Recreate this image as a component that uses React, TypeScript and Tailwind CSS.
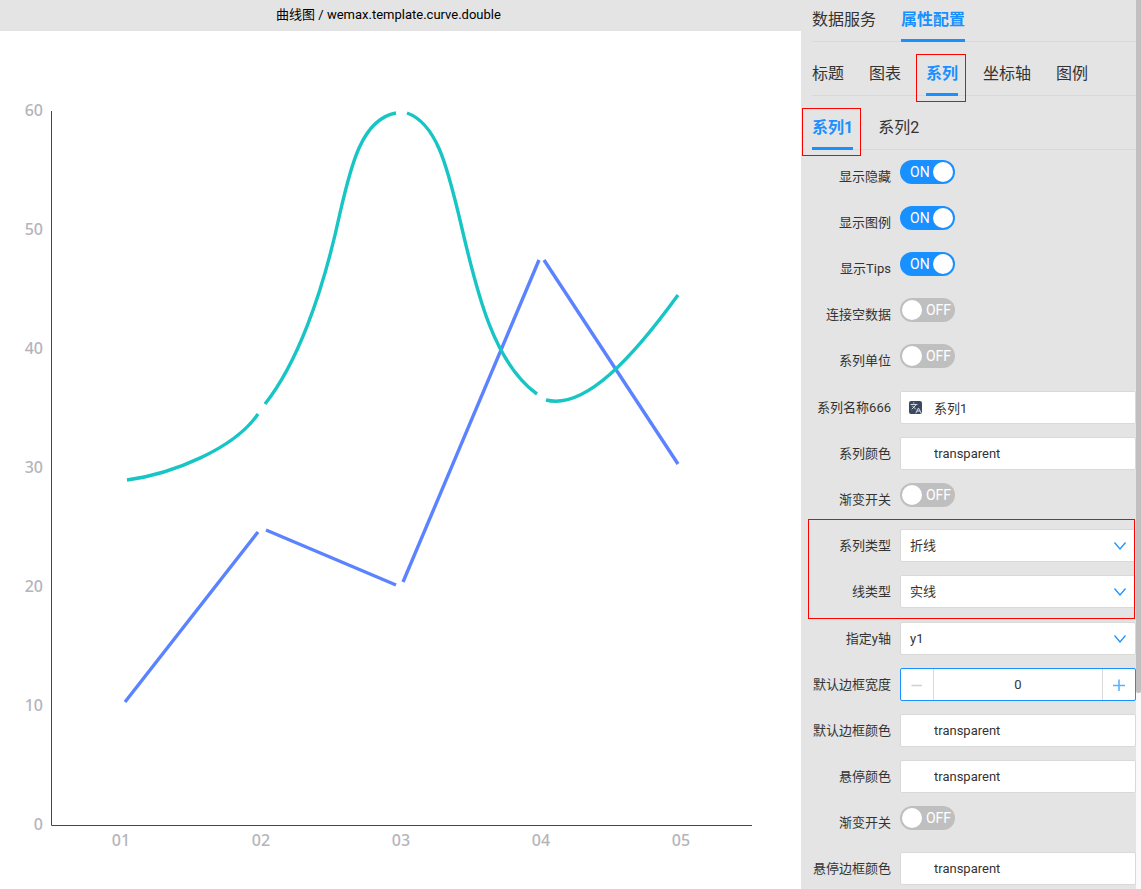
import { useState } from 'react';
import type { ReactNode } from 'react';
import { Languages } from 'lucide-react';
import clsx from 'clsx';

const yTicks = [60, 50, 40, 30, 20, 10, 0];
const xTicks = ['01', '02', '03', '04', '05'];

// line series, broken around each data point
const blueSegments = [
    'M125 702 L258 532',
    'M266 530 L396 585',
    'M403 582 L539 260',
    'M544 260 L678 464',
];

const greenSegments = [
    'M127 480 C172 474 234 449 258 414',
    'M265 404 C296 365 322 297 340 213 C351 165 362 119 396 113',
    'M407 113 C438 124 448 171 460 220 C477 294 494 363 537 394',
    'M546 400 C585 410 633 357 678 295',
];

function CurveChart() {
    return (
        <svg viewBox="0 31 801 858" className="block w-full" role="img" aria-label="曲线图">
            <g fill="none" stroke="#5b83ff" strokeWidth="3.4">
                {blueSegments.map((d) => (
                    <path key={d} d={d} />
                ))}
            </g>
            <g fill="none" stroke="#17c5c4" strokeWidth="3.4">
                {greenSegments.map((d) => (
                    <path key={d} d={d} />
                ))}
            </g>
            <path d="M51.5 111 V825.5 H752" fill="none" stroke="#41465c" strokeWidth="1" />
            <g className="fill-[#b4b4bc] font-['Noto_Sans',sans-serif] text-[16px] font-medium">
                {yTicks.map((tick, i) => (
                    <text key={tick} x="43" y={116 + i * 119} textAnchor="end">
                        {tick}
                    </text>
                ))}
                {xTicks.map((tick, i) => (
                    <text key={tick} x={121 + i * 140} y="846" textAnchor="middle">
                        {tick}
                    </text>
                ))}
            </g>
        </svg>
    );
}

interface TabRowProps {
    label: string;
    tabs: string[];
    initial: number;
    marked?: boolean;
}

function TabRow({ label, tabs, initial, marked }: TabRowProps) {
    const [active, setActive] = useState(initial);

    return (
        <div role="tablist" aria-label={label} className="flex h-[42px] gap-[25px] border-b border-[#d9d9d9]">
            {tabs.map((tab, i) => (
                <button
                    key={tab}
                    type="button"
                    role="tab"
                    aria-selected={i === active}
                    onClick={() => setActive(i)}
                    className={clsx(
                        'relative h-[42px] border-b-3 text-base leading-[39px]',
                        i === active ? 'border-[#1890ff] font-bold text-[#1890ff]' : 'border-transparent',
                    )}
                >
                    {tab}
                    {marked && i === initial && (
                        <span className="pointer-events-none absolute top-0 -right-2 -bottom-[9px] -left-[10px] border border-[#ff0000]" />
                    )}
                </button>
            ))}
        </div>
    );
}

function Row({ id, label, children }: { id: string; label: string; children: ReactNode }) {
    return (
        <div className="flex h-[33px] gap-[9px]">
            <label htmlFor={id} className="w-[79px] shrink-0 text-right leading-[33px] whitespace-nowrap">
                {label}
            </label>
            <div className="min-w-0 flex-1">{children}</div>
        </div>
    );
}

function SwitchRow({ id, label, on = false }: { id: string; label: string; on?: boolean }) {
    const [checked, setChecked] = useState(on);

    return (
        <Row id={id} label={label}>
            <button
                id={id}
                type="button"
                role="switch"
                aria-checked={checked}
                onClick={() => setChecked(!checked)}
                className={clsx(
                    'flex h-6 w-[55px] items-center justify-between rounded-full px-0.5 text-sm leading-6 text-white',
                    checked ? 'bg-[#1890ff]' : 'flex-row-reverse bg-[#bfbfbf]',
                )}
            >
                <span className={checked ? 'pl-2' : 'pr-0.5'}>{checked ? 'ON' : 'OFF'}</span>
                <span className="size-5 rounded-full bg-white" />
            </button>
        </Row>
    );
}

interface TextRowProps {
    id: string;
    label: string;
    value: string;
    icon?: boolean;
}

function TextRow({ id, label, value, icon }: TextRowProps) {
    return (
        <Row id={id} label={label}>
            <div className="relative">
                {icon && (
                    <span className="absolute top-[10px] left-[9px] flex size-[13px] items-center justify-center rounded-xs bg-[#3a4a62] text-[#d5dae2]">
                        <Languages className="size-[12px]" />
                    </span>
                )}
                <input
                    id={id}
                    type="text"
                    defaultValue={value}
                    className="block h-[33px] w-full rounded-xs border border-[#d9d9d9] bg-white pr-2 pl-[33px] outline-none focus:border-[#1890ff]"
                />
            </div>
        </Row>
    );
}

function SelectRow({ id, label, options }: { id: string; label: string; options: string[] }) {
    return (
        <Row id={id} label={label}>
            <div className="relative">
                <select
                    id={id}
                    className="block h-[33px] w-full appearance-none rounded-xs border border-[#d9d9d9] bg-white pr-8 pl-[9px] outline-none focus:border-[#1890ff]"
                >
                    {options.map((option) => (
                        <option key={option}>{option}</option>
                    ))}
                </select>
                <svg
                    viewBox="0 0 12 8"
                    className="pointer-events-none absolute top-[13px] right-[10px] h-2 w-3"
                    fill="none"
                    stroke="#1890ff"
                    strokeWidth="1.2"
                >
                    <path d="M0.5 0.5 L6 7 L11.5 0.5" />
                </svg>
            </div>
        </Row>
    );
}

function NumberRow({ id, label }: { id: string; label: string }) {
    const [value, setValue] = useState(0);

    return (
        <Row id={id} label={label}>
            <div className="flex h-[33px] overflow-hidden rounded-xs border border-[#1890ff] bg-white">
                <button
                    type="button"
                    aria-label="减少"
                    disabled={value === 0}
                    onClick={() => setValue(value - 1)}
                    className="flex w-[33px] shrink-0 items-center justify-center border-r border-[#d9d9d9]"
                >
                    <svg viewBox="0 0 12 12" className="size-3 stroke-[#d0d0d0]" strokeWidth="1.6">
                        <path d="M0.5 6.5 H11" />
                    </svg>
                </button>
                <input
                    id={id}
                    type="text"
                    inputMode="numeric"
                    value={value}
                    onChange={(e) => setValue(Number(e.target.value) || 0)}
                    className="min-w-0 flex-1 text-center outline-none"
                />
                <button
                    type="button"
                    aria-label="增加"
                    onClick={() => setValue(value + 1)}
                    className="flex w-[33px] shrink-0 items-center justify-center border-l border-[#d9d9d9]"
                >
                    <svg viewBox="0 0 12 12" className="size-3 stroke-[#5fb1ff]" strokeWidth="1.6">
                        <path d="M0 6.5 H12 M6 0.5 V12" />
                    </svg>
                </button>
            </div>
        </Row>
    );
}

export default function App() {
    return (
        <div className="flex h-screen overflow-hidden bg-white font-[Roboto,'Noto_Sans_CJK_SC',sans-serif] text-[13px] text-[#333]">
            {/* Preview */}
            <main className="min-w-0 flex-1">
                <h1 className="h-[31px] bg-[#e4e4e4] pr-6 text-center leading-[30px] text-black">
                    曲线图 / wemax.template.curve.double
                </h1>
                <CurveChart />
            </main>

            {/* Settings */}
            <aside className="flex w-[340px] shrink-0 bg-[#e4e4e4]">
                <div className="min-w-0 flex-1 overflow-hidden pl-[11px]">
                    <div className="flex flex-col gap-3">
                        <TabRow label="面板" tabs={['数据服务', '属性配置']} initial={1} />
                        <TabRow label="配置" tabs={['标题', '图表', '系列', '坐标轴', '图例']} initial={2} marked />
                        <TabRow label="系列" tabs={['系列1', '系列2']} initial={0} marked />
                    </div>

                    <form className="mt-[10px] flex flex-col gap-[14px]">
                        <div className="flex flex-col gap-[13px]">
                            <SwitchRow id="visible" label="显示隐藏" on />
                            <SwitchRow id="legend" label="显示图例" on />
                            <SwitchRow id="tips" label="显示Tips" on />
                            <SwitchRow id="connect-nulls" label="连接空数据" />
                            <SwitchRow id="unit" label="系列单位" />
                        </div>

                        <div className="flex flex-col gap-[13px]">
                            <TextRow id="name" label="系列名称666" value="系列1" icon />
                            <TextRow id="color" label="系列颜色" value="transparent" />
                            <SwitchRow id="gradient" label="渐变开关" />
                            <div className="relative flex flex-col gap-[13px]">
                                <SelectRow id="series-type" label="系列类型" options={['折线', '曲线', '柱状']} />
                                <SelectRow id="line-type" label="线类型" options={['实线', '虚线', '点线']} />
                                <span className="pointer-events-none absolute -top-[10px] right-px -bottom-[11px] -left-[4px] border border-[#ff0000]" />
                            </div>
                        </div>

                        <div className="flex flex-col gap-[13px]">
                            <SelectRow id="y-axis" label="指定y轴" options={['y1', 'y2']} />
                            <NumberRow id="border-width" label="默认边框宽度" />
                            <TextRow id="border-color" label="默认边框颜色" value="transparent" />
                            <TextRow id="hover-color" label="悬停颜色" value="transparent" />
                            <SwitchRow id="hover-gradient" label="渐变开关" />
                            <TextRow id="hover-border-color" label="悬停边框颜色" value="transparent" />
                        </div>
                    </form>
                </div>

                {/* Scrollbar */}
                <div className="w-[5px] shrink-0 bg-[#fafafa]">
                    <div className="h-[78%] rounded-b-xs bg-[#c0c0c0]" />
                </div>
            </aside>
        </div>
    );
}
